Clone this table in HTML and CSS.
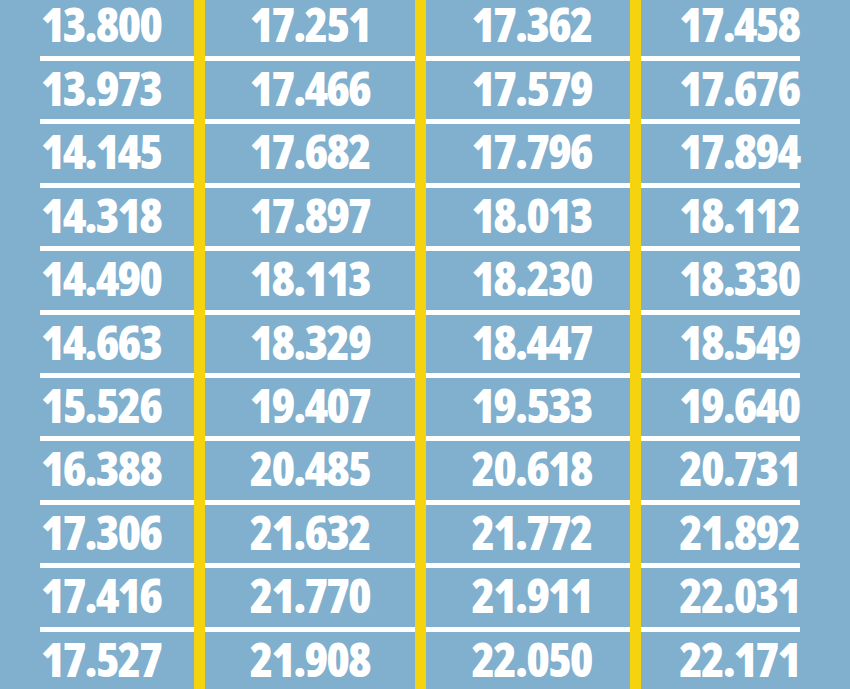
FILE: index.html
```html
<!DOCTYPE html>
<html lang="en">
<head>
<meta charset="utf-8">
<title>Table</title>
<link rel="stylesheet" href="styles.css">
</head>
<body>
<div class="table">
  <div class="col c1">
    <div class="cell first">13.800</div>
    <div class="cell">13.973</div>
    <div class="cell">14.145</div>
    <div class="cell">14.318</div>
    <div class="cell">14.490</div>
    <div class="cell">14.663</div>
    <div class="cell">15.526</div>
    <div class="cell">16.388</div>
    <div class="cell">17.306</div>
    <div class="cell">17.416</div>
    <div class="cell last">17.527</div>
  </div>
  <div class="col c2">
    <div class="cell first">17.251</div>
    <div class="cell">17.466</div>
    <div class="cell">17.682</div>
    <div class="cell">17.897</div>
    <div class="cell">18.113</div>
    <div class="cell">18.329</div>
    <div class="cell">19.407</div>
    <div class="cell">20.485</div>
    <div class="cell">21.632</div>
    <div class="cell">21.770</div>
    <div class="cell last">21.908</div>
  </div>
  <div class="col c3">
    <div class="cell first">17.362</div>
    <div class="cell">17.579</div>
    <div class="cell">17.796</div>
    <div class="cell">18.013</div>
    <div class="cell">18.230</div>
    <div class="cell">18.447</div>
    <div class="cell">19.533</div>
    <div class="cell">20.618</div>
    <div class="cell">21.772</div>
    <div class="cell">21.911</div>
    <div class="cell last">22.050</div>
  </div>
  <div class="col c4">
    <div class="cell first">17.458</div>
    <div class="cell">17.676</div>
    <div class="cell">17.894</div>
    <div class="cell">18.112</div>
    <div class="cell">18.330</div>
    <div class="cell">18.549</div>
    <div class="cell">19.640</div>
    <div class="cell">20.731</div>
    <div class="cell">21.892</div>
    <div class="cell">22.031</div>
    <div class="cell last">22.171</div>
  </div>
</div>
</body>
</html>
```
FILE: styles.css
```css
html, body {
  margin: 0;
  padding: 0;
  background: #80b0ce;
  overflow: hidden;
}
body {
  width: 850px;
  height: 689px;
}
.table {
  display: flex;
  margin-left: 40px;
  width: 760px;
  height: 689px;
  font-family: "Open Sans", "DejaVu Sans Condensed", sans-serif;
  font-stretch: 75%;
  font-weight: 760;
  font-size: 48px;
  letter-spacing: -2px;
  color: #ffffff;
}
.col {
  display: flex;
  flex-direction: column;
  height: 689px;
}
.c1 { width: 154px; }
.c2 { width: 210px; border-left: 11px solid #f5d30f; }
.c3 { width: 205px; border-left: 11px solid #f5d30f; }
.c4 { width: 159px; border-left: 11px solid #f5d30f; }
.cell {
  height: 55.4px;
  padding-top: 3px;
  border-bottom: 5px solid #ffffff;
  line-height: 48px;
  flex: none;
  box-sizing: content-box;
  white-space: nowrap;
}
.cell.first {
  height: 56px;
  padding-top: 0;
}
.cell.last {
  border-bottom: none;
}
.c1 .cell { padding-left: 1px; }
.c2 .cell { padding-left: 45px; }
.c3 .cell { padding-left: 46px; }
.c4 .cell { padding-left: 38px; }
```
